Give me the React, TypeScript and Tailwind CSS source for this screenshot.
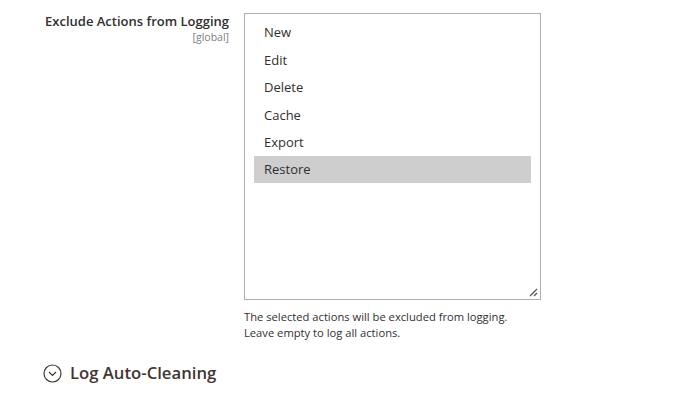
import { useState } from "react";

const actions = ["New", "Edit", "Delete", "Cache", "Export", "Restore"];

export default function App() {
  const [selected, setSelected] = useState<string[]>(["Restore"]);

  const toggle = (a: string) =>
    setSelected((s) => (s.includes(a) ? s.filter((x) => x !== a) : [...s, a]));

  return (
    <div
      className="w-[685px] h-[399px] bg-white text-[#303030] overflow-hidden"
      style={{ fontFamily: '"Open Sans", "Noto Sans", sans-serif' }}
    >
      {/* Field row */}
      <div className="flex pt-[13px]">
        <div className="w-[230px] shrink-0 pr-[1px] text-right">
          <div className="text-[13px] font-semibold leading-[16px] text-[#303030]">
            Exclude Actions from Logging
          </div>
          <div className="text-[10.5px] leading-[14px] text-[#808080] mt-[1px]">
            [global]
          </div>
        </div>

        <div className="ml-[14px]">
          <div className="relative w-[297px] h-[287px] border border-[#adadad] bg-white px-[9px] pt-[5px]">
            {actions.map((a) => (
              <div
                key={a}
                onClick={() => toggle(a)}
                className={`h-[27.4px] flex items-center pl-[10px] pt-[1px] text-[13px] text-[#303030] cursor-default ${
                  selected.includes(a) ? "bg-[#cecece]" : ""
                }`}
              >
                {a}
              </div>
            ))}
            <svg
              className="absolute right-[2px] bottom-[2px]"
              width="10"
              height="10"
              viewBox="0 0 10 10"
            >
              <path d="M9 2 L2 9 M9 6 L6 9" stroke="#555" strokeWidth="1.3" />
            </svg>
          </div>
          <p className="mt-[9px] text-[11.2px] leading-[16px] text-[#303030]">
            The selected actions will be excluded from logging.
            <br />
            Leave empty to log all actions.
          </p>
        </div>
      </div>

      {/* Section header */}
      <div className="flex items-center mt-[21px] pl-[43px]">
        <svg width="19" height="19" viewBox="0 0 19 19">
          <circle cx="9.5" cy="9.5" r="8.5" fill="none" stroke="#41362f" strokeWidth="1.2" />
          <path d="M6 8 L9.5 11.5 L13 8" fill="none" stroke="#41362f" strokeWidth="1.2" />
        </svg>
        <span className="ml-[8px] text-[16.7px] font-semibold text-[#41362f] leading-[22px]">
          Log Auto-Cleaning
        </span>
      </div>
    </div>
  );
}
